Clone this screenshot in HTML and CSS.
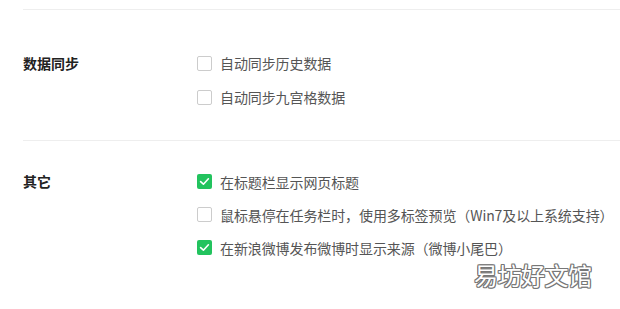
FILE: index.html
```html
<!DOCTYPE html>
<html lang="zh-CN">
<head>
<meta charset="utf-8">
<link rel="stylesheet" href="styles.css">
</head>
<body>
<div class="page">
  <div class="divider"></div>
  <section class="group group-sync">
    <div class="label">数据同步</div>
    <div class="options">
      <label class="opt"><span class="box"></span><span class="txt">自动同步历史数据</span></label>
      <label class="opt"><span class="box"></span><span class="txt">自动同步九宫格数据</span></label>
    </div>
  </section>
  <div class="divider"></div>
  <section class="group group-other">
    <div class="label">其它</div>
    <div class="options">
      <label class="opt"><span class="box checked"><svg viewBox="0 0 15 15" width="15" height="15"><path d="M3.6 7.6 L6.4 10.2 L11.4 4.8" fill="none" stroke="#fff" stroke-width="1.6" stroke-linecap="round" stroke-linejoin="round"/></svg></span><span class="txt">在标题栏显示网页标题</span></label>
      <label class="opt"><span class="box"></span><span class="txt">鼠标悬停在任务栏时，使用多标签预览（Win7及以上系统支持）</span></label>
      <label class="opt"><span class="box checked"><svg viewBox="0 0 15 15" width="15" height="15"><path d="M3.6 7.6 L6.4 10.2 L11.4 4.8" fill="none" stroke="#fff" stroke-width="1.6" stroke-linecap="round" stroke-linejoin="round"/></svg></span><span class="txt">在新浪微博发布微博时显示来源（微博小尾巴）</span></label>
    </div>
  </section>
  <div class="watermark">易坊好文馆</div>
</div>
</body>
</html>
```
FILE: styles.css
```css
html, body {
  margin: 0;
  padding: 0;
  background: #fff;
}
body {
  font-family: "Noto Sans CJK SC", "Microsoft YaHei", "Noto Sans", sans-serif;
  width: 620px;
  height: 309px;
  overflow: hidden;
}
.page {
  position: relative;
  height: 309px;
  padding-top: 9px;
  box-sizing: border-box;
}
.divider {
  height: 1px;
  background: #eeeeee;
  margin-left: 23px;
}
.group {
  display: flex;
  padding-left: 23px;
}
.group-sync {
  padding-top: 36px;
  padding-bottom: 26px;
}
.group-sync .opt {
  height: 34px;
}
.group-other {
  padding-top: 24px;
}
.group-other .opt {
  height: 33px;
}
.label {
  width: 174px;
  font-size: 14px;
  font-weight: bold;
  color: #222;
  line-height: 34px;
  height: 34px;
}
.group-other .label {
  line-height: 33px;
  height: 33px;
}
.options {
  display: flex;
  flex-direction: column;
}
.opt {
  display: flex;
  align-items: center;
  font-size: 14px;
  color: #555;
  white-space: nowrap;
}
.box {
  flex-shrink: 0;
  box-sizing: border-box;
  width: 15px;
  height: 15px;
  border: 1px solid #cccccc;
  border-radius: 2px;
  margin-right: 8px;
  background: #fff;
  display: flex;
  align-items: center;
  justify-content: center;
}
.box.checked {
  border: none;
  background: #22c35e;
}
.txt {
  letter-spacing: -0.1px;
}
.watermark {
  position: absolute;
  left: 474px;
  top: 257px;
  font-size: 24px;
  line-height: 36px;
  color: #fff;
  letter-spacing: -0.5px;
  text-shadow:
    1px 0 0 #777, -1px 0 0 #777, 0 1px 0 #777, 0 -1px 0 #777,
    1px 1px 0 #777, -1px -1px 0 #777, 1px -1px 0 #777, -1px 1px 0 #777;
}
```
